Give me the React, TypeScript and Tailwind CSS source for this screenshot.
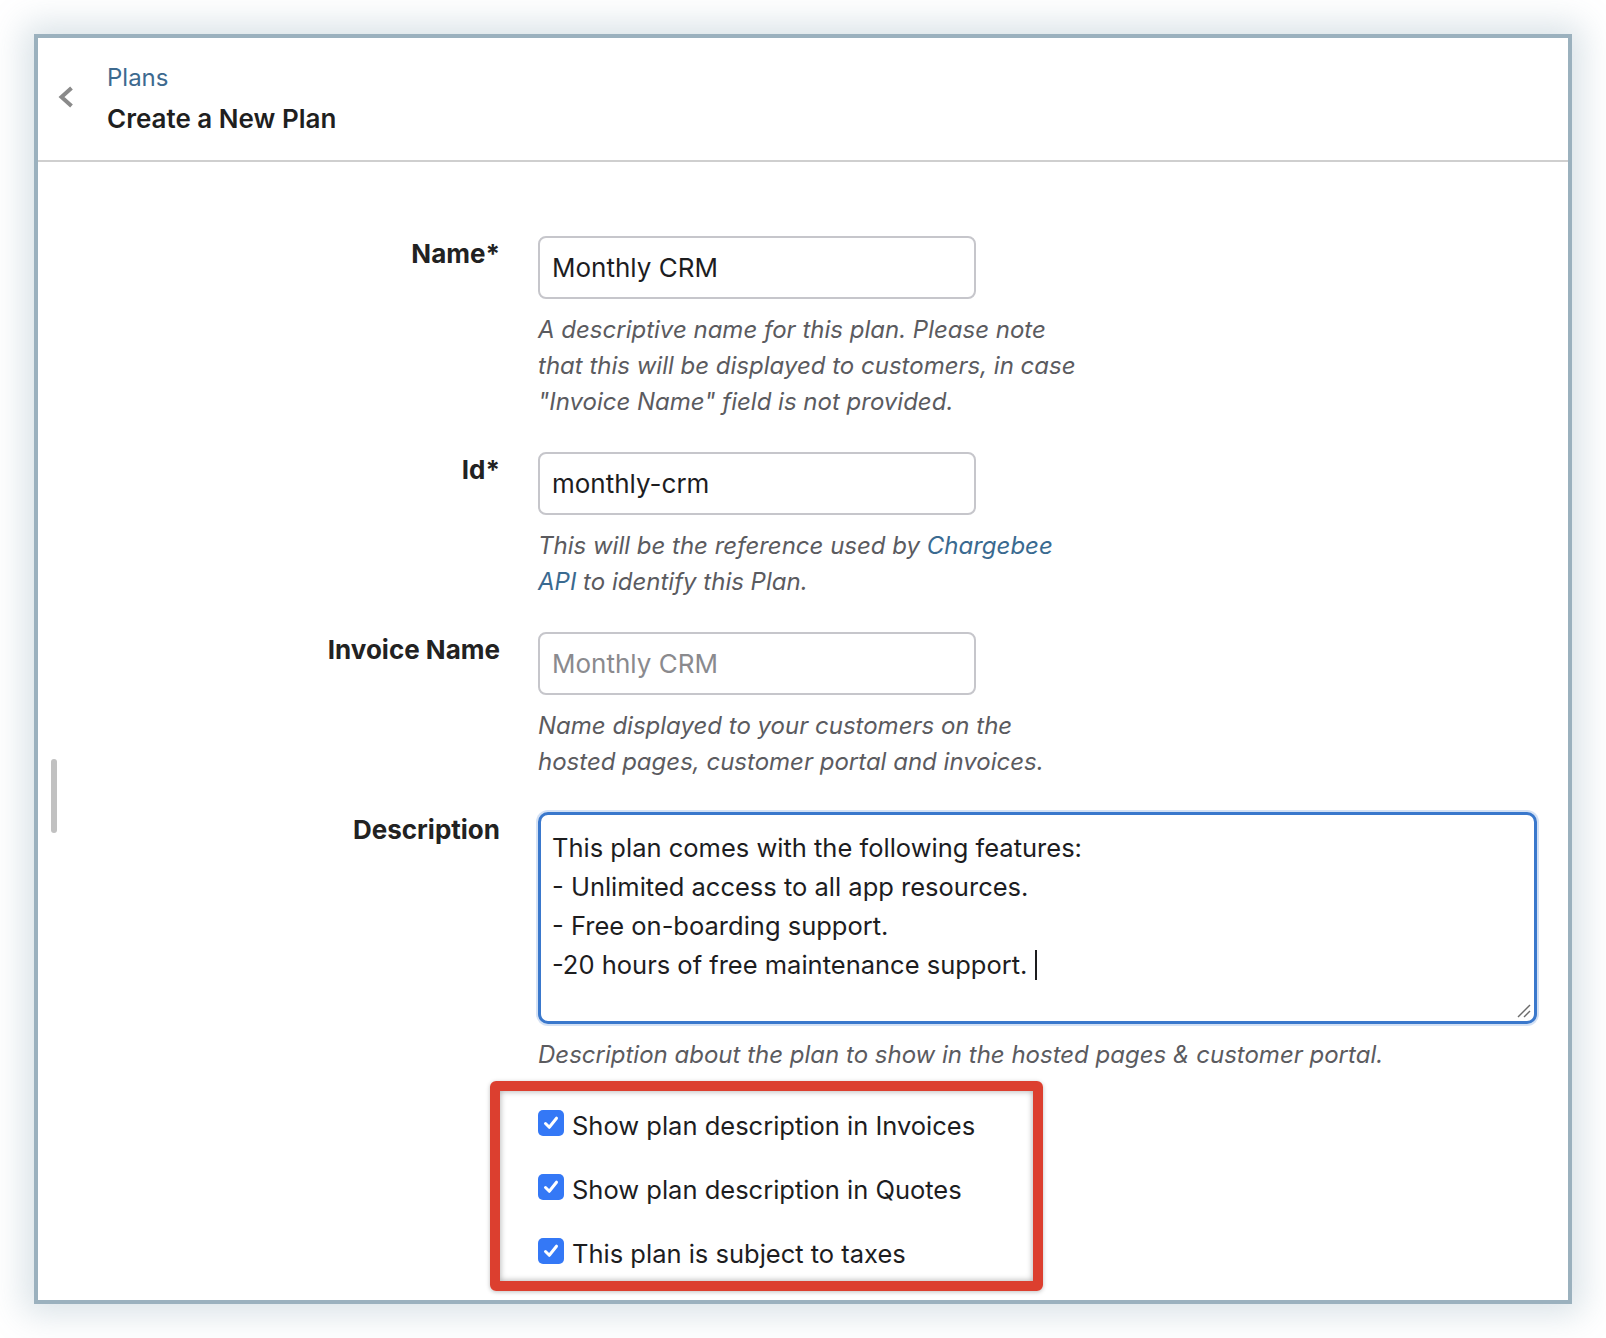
import React from "react";

function Check() {
  return (
    <span className="mt-[2px] flex h-[26px] w-[26px] shrink-0 items-center justify-center rounded-[5px] bg-[#3478f6]">
      <svg width="18" height="18" viewBox="0 0 18 18" fill="none">
        <path d="M3.5 9.5 L7.3 13.3 L14.5 4.2" stroke="white" strokeWidth="3" strokeLinecap="round" strokeLinejoin="round" />
      </svg>
    </span>
  );
}

function Row({ label, children }: { label: string; children: React.ReactNode }) {
  return (
    <div className="flex">
      <div className="w-[462px] shrink-0 text-right text-[26px] font-bold leading-[36px] text-[#222]">{label}</div>
      <div className="ml-[38px] flex flex-col">{children}</div>
    </div>
  );
}

function Input({ value, placeholder }: { value: string; placeholder?: boolean }) {
  return (
    <div
      className={
        "flex h-[63px] w-[438px] items-center rounded-[8px] border-2 border-[#c6c6cb] bg-white px-[12px] text-[26px] " +
        (placeholder ? "text-[#8a8a8e]" : "text-[#1d1d1f]")
      }
    >
      {value}
    </div>
  );
}

function Help({ children }: { children: React.ReactNode }) {
  return <div className="mt-[13px] text-[24px] italic leading-[36px] text-[#5b5b5f]">{children}</div>;
}

export default function App() {
  return (
    <div className="h-[1338px] w-full bg-white pl-[34px] pt-[34px]" style={{ fontFamily: "Inter, 'Noto Sans', sans-serif" }}>
      <div className="relative h-[1270px] w-[1538px] overflow-hidden border-4 border-[#9bb1be] bg-white shadow-[0_0_32px_10px_rgba(120,150,170,0.28)]">
        <div className="absolute left-[13px] top-[721px] h-[74px] w-[6px] rounded-full bg-[#c1c1c1]" />
        {/* header */}
        <div className="flex h-[124px] items-start border-b-2 border-[#cfcfcf] pl-[20px] pt-[24px]">
          <div className="flex h-[70px] items-center">
            <svg width="16" height="22" viewBox="0 0 16 22" fill="none">
              <path d="M13.5 2 L3.5 11 L13.5 20" stroke="#8a8a8a" strokeWidth="4" strokeLinejoin="miter" />
            </svg>
          </div>
          <div className="ml-[33px] flex flex-col">
            <div className="text-[24px] leading-[32px] text-[#3d6a8f]">Plans</div>
            <div className="mt-[9px] text-[26px] font-semibold leading-[32px] text-[#1f1f1f]">Create a New Plan</div>
          </div>
        </div>
        {/* form */}
        <div className="flex flex-col pt-[74px]">
          <Row label="Name*">
            <Input value="Monthly CRM" />
            <Help>
              A descriptive name for this plan. Please note
              <br />
              that this will be displayed to customers, in case
              <br />
              "Invoice Name" field is not provided.
            </Help>
          </Row>
          <div className="mt-[32px]">
            <Row label="Id*">
              <Input value="monthly-crm" />
              <Help>
                This will be the reference used by <span className="text-[#3a6a90]">Chargebee</span>
                <br />
                <span className="text-[#3a6a90]">API</span> to identify this Plan.
              </Help>
            </Row>
          </div>
          <div className="mt-[32px]">
            <Row label="Invoice Name">
              <Input value="Monthly CRM" placeholder />
              <Help>
                Name displayed to your customers on the
                <br />
                hosted pages, customer portal and invoices.
              </Help>
            </Row>
          </div>
          <div className="mt-[32px]">
            <Row label="Description">
              <div className="relative h-[212px] w-[999px] rounded-[10px] border-[3px] border-[#3a78cc] bg-white px-[11px] pt-[13px] text-[25.5px] leading-[39px] text-[#1d1d1f] shadow-[0_0_0_2px_rgba(58,120,204,0.22)]">
                <div>This plan comes with the following features:</div>
                <div>- Unlimited access to all app resources.</div>
                <div>- Free on-boarding support.</div>
                <div className="flex items-center">
                  -20 hours of free maintenance support.
                  <span className="ml-[8px] inline-block h-[30px] w-[2px] bg-[#1d1d1f]" />
                </div>
                <svg className="absolute bottom-[3px] right-[3px]" width="16" height="16" viewBox="0 0 16 16" fill="none">
                  <path d="M15 3 L3 15" stroke="#6b6b6b" strokeWidth="1.5" />
                  <path d="M15 9 L9 15" stroke="#6b6b6b" strokeWidth="1.5" />
                </svg>
              </div>
              <div className="mt-[13px] text-[24px] italic leading-[36px] text-[#5b5b5f]">
                Description about the plan to show in the hosted pages &amp; customer portal.
              </div>
              <div className="ml-[-48px] mt-[8px] flex h-[210px] w-[553px] flex-col gap-[28px] rounded-[6px] border-[10px] border-[#dc3f2f] pb-[9px] pl-[38px] pt-[17px] shadow-[inset_0_0_6px_rgba(0,0,0,0.35),0_1px_4px_rgba(0,0,0,0.25)]">
                {["Show plan description in Invoices", "Show plan description in Quotes", "This plan is subject to taxes"].map((t) => (
                  <div key={t} className="flex items-start gap-[8px] text-[25.5px] leading-[36px] text-[#1d1d1f]">
                    <Check />
                    <span>{t}</span>
                  </div>
                ))}
              </div>
            </Row>
          </div>
        </div>
      </div>
    </div>
  );
}
